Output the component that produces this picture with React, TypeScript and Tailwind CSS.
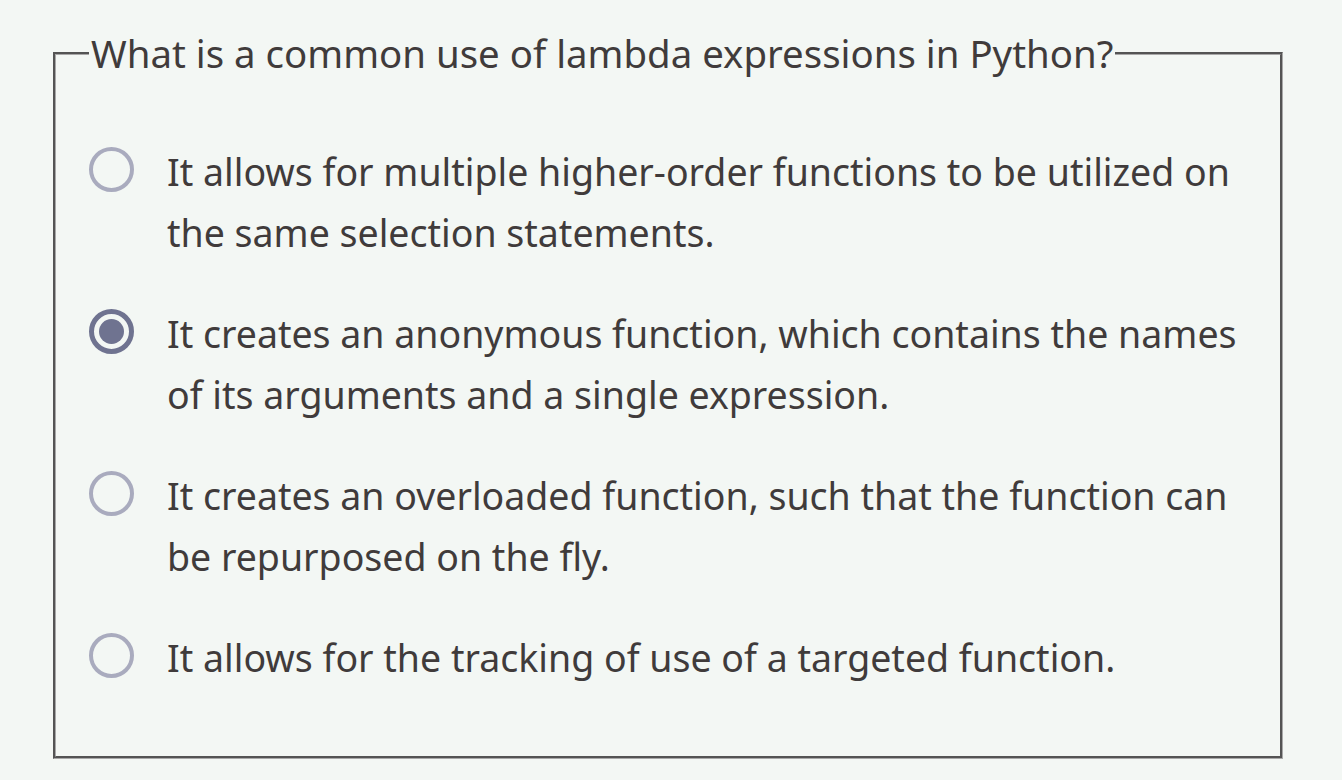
import React from "react";

const options = [
  "It allows for multiple higher-order functions to be utilized on the same selection statements.",
  "It creates an anonymous function, which contains the names of its arguments and a single expression.",
  "It creates an overloaded function, such that the function can be repurposed on the fly.",
  "It allows for the tracking of use of a targeted function.",
];

export default function App() {
  const selected = 1;
  return (
    <div className="min-h-[780px] w-[1342px] bg-[#f3f7f4] pt-[23px] font-['Noto_Sans',sans-serif] text-[#403b3b]">
      <fieldset className="mx-[53px] w-[1230px] border-[3px] [border-style:groove] border-[#a8a8a8] px-[33px] pt-[57px] pb-[68px]">
        <legend className="px-[2px] text-[38.4px] leading-[61px]">
          What is a common use of lambda expressions in Python?
        </legend>
        <div className="flex flex-col gap-[40px]">
          {options.map((opt, i) => (
            <label key={i} className="flex items-start gap-[33px]">
              <span className="mt-[6px] flex h-[45px] w-[45px] shrink-0 items-center justify-center">
                {i === selected ? (
                  <span className="flex h-[45px] w-[45px] items-center justify-center rounded-full border-[5px] border-[#6f7390]">
                    <span className="h-[25px] w-[25px] rounded-full bg-[#6f7390]" />
                  </span>
                ) : (
                  <span className="h-[45px] w-[45px] rounded-full border-[4px] border-[#a9abbe]" />
                )}
              </span>
              <span className="w-[1080px] text-[37.5px] leading-[61px]">{opt}</span>
            </label>
          ))}
        </div>
      </fieldset>
    </div>
  );
}
